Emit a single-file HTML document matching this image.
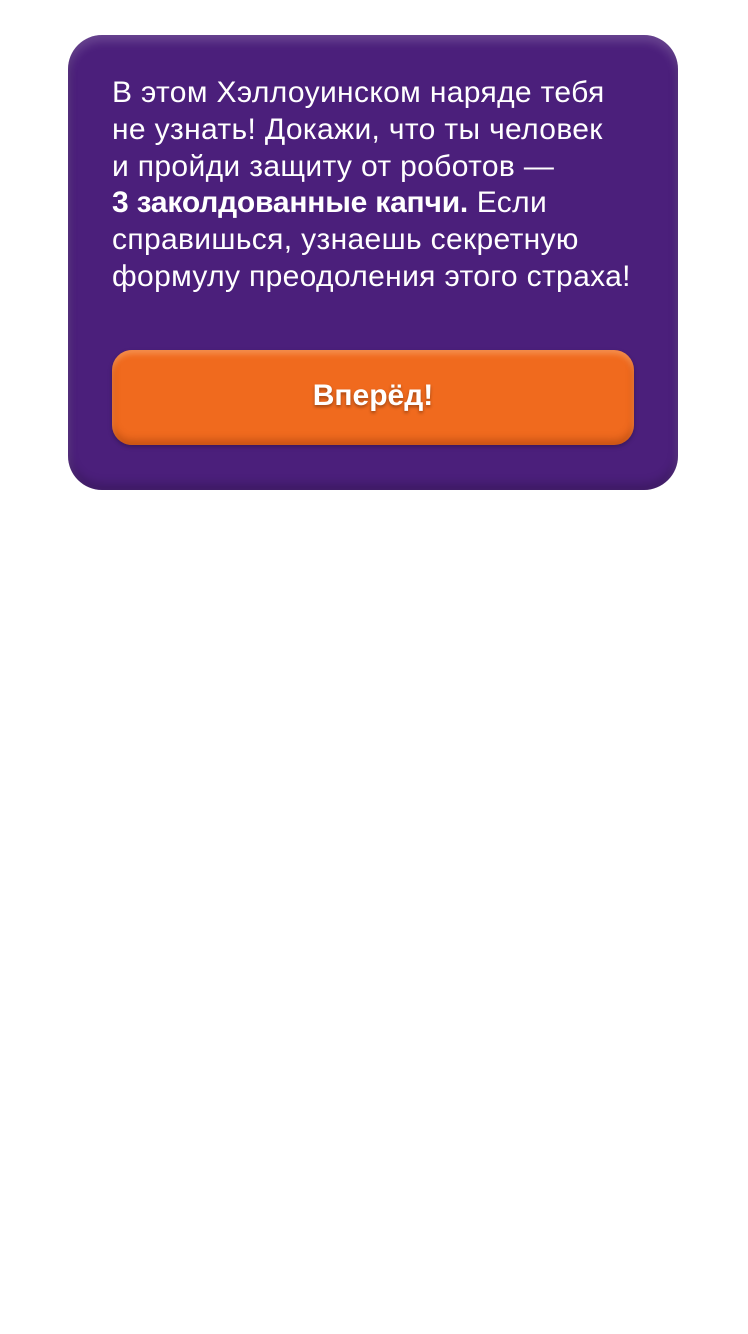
<!DOCTYPE html>
<html><head><meta charset="utf-8"><style>
html,body{margin:0;padding:0;background:#fff;width:748px;height:1334px;overflow:hidden}
.card{position:absolute;left:68px;top:35px;width:610px;height:455px;background:#4b1f7b;border-radius:34px;
box-shadow:inset 0 6px 10px rgba(255,255,255,0.18),inset 0 -6px 10px rgba(0,0,0,0.2)}
.txt{position:absolute;left:112px;top:75px;color:#fff;font-family:"Liberation Sans",sans-serif;font-size:30px;line-height:36.8px;letter-spacing:0.35px;white-space:nowrap}
.txt b{letter-spacing:-0.2px}
.btn{position:absolute;left:112px;top:350px;width:522px;height:95px;background:#f06a1e;border-radius:20px;
box-shadow:inset 0 4px 6px rgba(255,200,150,0.4),inset 0 -5px 8px rgba(120,40,0,0.35),0 2px 4px rgba(0,0,0,0.25);
color:#fff;font-family:"Liberation Sans",sans-serif;font-weight:bold;font-size:30px;letter-spacing:0px;text-align:center;line-height:92px;text-shadow:0 2px 3px rgba(0,0,0,0.35)}
</style></head><body>
<div class="card"></div>
<div class="txt">В этом Хэллоуинском наряде тебя<br>не узнать! Докажи, что ты человек<br>и пройди защиту от роботов —<br><b>3 заколдованные капчи.</b> Если<br>справишься, узнаешь секретную<br>формулу преодоления этого страха!</div>
<div class="btn">Вперёд!</div>
</body></html>
